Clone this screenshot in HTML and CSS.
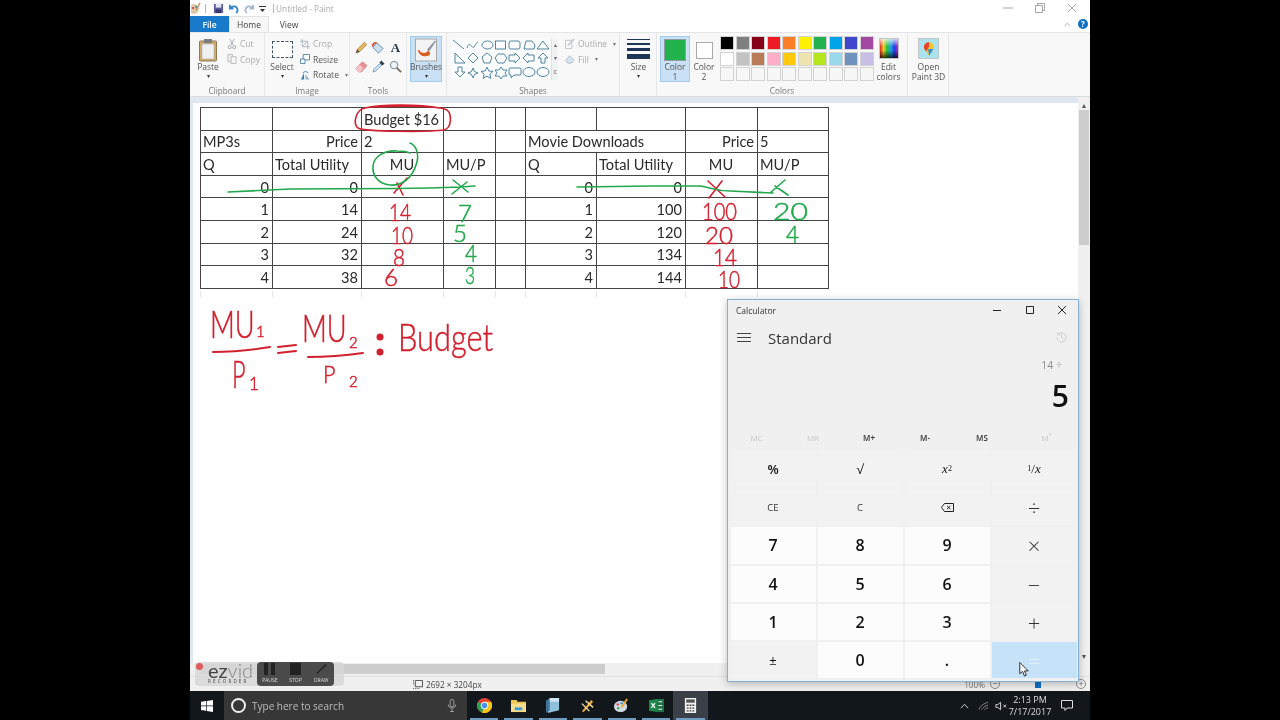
FILE: index.html
```html
<!DOCTYPE html>
<html lang="en">
<head>
<meta charset="utf-8">
<title>Untitled - Paint</title>
<link rel="stylesheet" href="styles.css">
</head>
<body>
<div class="stage">
  <header class="titlebar">
    <svg class="qa-app" viewBox="0 0 10 12"><circle cx="3" cy="7" r="5" fill="#d9c9a8"/><circle cx="2" cy="6" r="1" fill="#d33"/><circle cx="5" cy="5" r="1" fill="#38b"/><path d="M5 8 9 1" stroke="#b86" stroke-width="1.4"/></svg>
    <span class="qa-sep"></span>
    <svg class="qa" viewBox="0 0 12 12"><path d="M1 1h10v10H1z" fill="#5c5f9e"/><path d="M3 1h6v4H3z" fill="#e8e8f2"/><path d="M3 7h6v4H3z" fill="#33366e"/></svg>
    <svg class="qa" viewBox="0 0 12 12"><path d="M2 2v4h4M2.500 5.500C5 2.500 10 3 10.500 8c0 1-.5 2-1.500 3" fill="none" stroke="#3a86c8" stroke-width="2"/></svg>
    <svg class="qa qa-off" viewBox="0 0 12 12"><path d="M10 2v4H6M9.500 5.500C7 2.500 2 3 1.500 8c0 1 .5 2 1.500 3" fill="none" stroke="#a8bccb" stroke-width="2"/></svg>
    <svg class="qa-drop" viewBox="0 0 7 7"><path d="M0 1h7v1H0zM1 4h5L3.500 7z" fill="#333"/></svg>
    <span class="qa-sep"></span>
    <span class="title-text">Untitled - Paint</span>
    <div class="window-btns">
      <svg viewBox="0 0 10 10"><path d="M0 5h10" stroke="#a5a5a5"/></svg>
      <svg viewBox="0 0 10 10"><path d="M.5 2.500h7v7h-7zM2.500 2.500v-2h7v7h-2" fill="none" stroke="#a5a5a5"/></svg>
      <svg viewBox="0 0 10 10"><path d="M1 1l8 8M9 1l-8 8" stroke="#a5a5a5"/></svg>
    </div>
  </header>

  <nav class="tabs">
    <span class="tab tab-file">File</span>
    <span class="tab tab-active">Home</span>
    <span class="tab">View</span>
    <span class="tabs-right">
      <svg class="collapse" viewBox="0 0 8 5"><path d="M.5 4.500 4 1l3.500 3.500" fill="none" stroke="#a5a5a5"/></svg>
      <span class="help">?</span>
    </span>
  </nav>

  <section class="ribbon">
    <div class="group g-clipboard">
      <div class="group-body">
        <div class="big w36">
          <svg class="big-icon" viewBox="0 0 20 24"><rect x="1.500" y="3" width="17" height="20" rx="1" fill="#d0ab6c" stroke="#8d7a55"/><rect x="4" y="6" width="12" height="15" fill="#eef0f2" stroke="#a9a9a9" stroke-width=".5"/><rect x="6" y="1" width="8" height="4" fill="#7d7d80"/></svg>
          <span class="big-label">Paste</span><span class="drop">▾</span>
        </div>
        <ul class="small-list">
          <li class="small off"><svg viewBox="0 0 11 11"><path d="M3 0l4 7M8 0 4 7" stroke="#9fa3a8" fill="none"/><circle cx="3" cy="9" r="1.700" fill="none" stroke="#9fa3a8"/><circle cx="8" cy="9" r="1.700" fill="none" stroke="#9fa3a8"/></svg>Cut</li>
          <li class="small off"><svg viewBox="0 0 11 11"><path d="M1 .5h5v8H1z" fill="#eee" stroke="#bbb"/><path d="M4.500 3h5.500v7.500H4.500z" fill="#f6f6f6" stroke="#bbb"/></svg>Copy</li>
        </ul>
      </div>
      <span class="group-label">Clipboard</span>
    </div>

    <div class="group g-image">
      <div class="group-body">
        <div class="big w34">
          <span class="big-icon select-icon"></span>
          <span class="big-label">Select</span><span class="drop">▾</span>
        </div>
        <ul class="small-list">
          <li class="small off"><svg viewBox="0 0 11 11"><path d="M2.500 0v8.500H11M0 2.500h8.500V11" fill="none" stroke="#a9b4bb"/><path d="M3 8 8 3" stroke="#a9b4bb"/></svg>Crop</li>
          <li class="small"><svg viewBox="0 0 11 11"><path d="M3.500.5h7v6h-7z" fill="#fff" stroke="#4a7fa8"/><path d="M.5 5.500h5v5h-5z" fill="#fff" stroke="#4a7fa8"/></svg>Resize</li>
          <li class="small"><svg viewBox="0 0 11 11"><path d="M1 10.500 4.500 3v7.500z" fill="#3f7fb0"/><path d="M6 10.500V5l4.500 5.500z" fill="#8fb6d3"/><path d="M3 3Q6 0 9 3" fill="none" stroke="#3f7fb0"/></svg>Rotate<span class="drop-inline">▾</span></li>
        </ul>
      </div>
      <span class="group-label">Image</span>
    </div>

    <div class="group g-tools">
      <div class="tool-grid">
        <svg viewBox="0 0 14 14"><path d="M1 13l1.500-4L10 1.500 12.500 4 5 11.500z" fill="#e6b85c" stroke="#8a6a30" stroke-width=".7"/><path d="M1 13l1.500-4 2.500 2.500z" fill="#555"/></svg>
        <svg viewBox="0 0 14 14"><path d="M5 2l7 6-5 5-6-6z" fill="#cfe0ee" stroke="#5d8fb6"/><path d="M1 6Q0 2 5 2" fill="none" stroke="#d8533d" stroke-width="2"/></svg>
        <span class="tool-a">A</span>
        <svg viewBox="0 0 14 14"><path d="M1 9l7-7 5 4-6 7H4z" fill="#ee8f96" stroke="#bf6d73" stroke-width=".6"/><path d="M1 9l4-4 4 4-3 4H4z" fill="#f2c4c6"/></svg>
        <svg viewBox="0 0 14 14"><path d="M1 13l1-3 6-6 2 2-6 6z" fill="#cfe4f3" stroke="#4d7ea6" stroke-width=".7"/><path d="M8 3l2-2.500 3.500 3.500L11 6z" fill="#33424f"/></svg>
        <svg viewBox="0 0 14 14"><circle cx="5.500" cy="5.500" r="4" fill="#eef5fa" stroke="#6d7d88"/><path d="M8.500 8.500 13 13" stroke="#7b6f5f" stroke-width="2"/></svg>
      </div>
      <span class="group-label">Tools</span>
    </div>

    <div class="group g-brushes">
      <div class="big big-active w32">
        <svg class="big-icon brush-icon" viewBox="0 0 22 23"><rect x=".5" y=".5" width="21" height="22" fill="#f3f3f3" stroke="#a8a8a8"/><path d="M12 11 20 2l1 1-7 10z" fill="#8f9aa6"/><path d="M3 12c1 5 6 7 11 5 2-1 1-4-1-5-1 3-6 3-8 1 0-1-1-2-2-1z" fill="#d9601f"/></svg>
        <span class="big-label">Brushes</span><span class="drop">▾</span>
      </div>
      <span class="group-label">&nbsp;</span>
    </div>

    <div class="group g-shapes">
      <div class="group-body">
        <div class="shape-panel">
          <svg class="shape-art" viewBox="0 0 100 40">
            <path d="M2 1l11 9M16 9c3-9 5 2 7-1s3-5 4-5"/>
            <ellipse cx="36.500" cy="6" rx="5.500" ry="4"/><rect x="44.500" y="2" width="10" height="8"/><rect x="58" y="2" width="11" height="8" rx="2"/><path d="M73 10l2-8h6l3 4-1 4zM92 2l6 8H86z"/>
            <path d="M4 14v10h10zM22 14l5 5-5 5-5-5zM36 14l5 4-2 6h-6l-2-6zM47 15h6l3 4-3 5h-6l-3-5zM58 16h6v-2l5 5-5 5v-2h-6zM83 16h-6v-2l-5 5 5 5v-2h6zM92 14l5 5h-3v5h-4v-5h-3z"/>
            <path d="M7 28v5H4l5 5 5-5h-3v-5zM22 29l1.500 3.500L27 34l-3.500 1.500L22 39l-1.500-3.500L17 34l3.500-1.500zM36 28l1.800 4 4.200.4-3.200 2.800 1 4.200-3.800-2.200-3.800 2.200 1-4.200-3.200-2.800 4.200-.4zM50 28l2 3h4l-2 3 2 3h-4l-2 3-2-3h-4l2-3-2-3h4z"/>
            <path d="M59 29h10a1 1 0 0 1 1 1v5a1 1 0 0 1-1 1h-6l-3 3v-3h-1a1 1 0 0 1-1-1v-5a1 1 0 0 1 1-1z"/>
            <ellipse cx="78" cy="33" rx="6" ry="4.500"/><ellipse cx="92" cy="33" rx="6" ry="4.500"/>
          </svg>
          <div class="shape-scroll"><span>▴</span><span>▾</span><span>≡</span></div>
        </div>
        <ul class="small-list outline-list">
          <li class="small off"><svg viewBox="0 0 11 11"><path d="M.5 1.500h7v9h-7z" fill="none" stroke="#bcc3c9"/><path d="M3 7l7-7" stroke="#bcc3c9" stroke-width="1.500"/></svg>Outline<span class="drop-inline">▾</span></li>
          <li class="small off"><svg viewBox="0 0 11 11"><path d="M1 7l4-5 5 5-3 3H3z" fill="#d9e6ef" stroke="#a9bac6"/></svg>Fill<span class="drop-inline">▾</span></li>
        </ul>
      </div>
      <span class="group-label">Shapes</span>
    </div>

    <div class="group g-size">
      <div class="big w37">
        <span class="big-icon size-icon"><i class="l1"></i><i class="l2"></i><i class="l3"></i><i class="l4"></i></span>
        <span class="big-label">Size</span><span class="drop">▾</span>
      </div>
      <span class="group-label">&nbsp;</span>
    </div>

    <div class="group g-colors">
      <div class="group-body">
        <div class="big big-active w30 color-btn">
          <span class="big-icon"><span class="swatch-big green"></span></span>
          <span class="big-label">Color<br>1</span>
        </div>
        <div class="big w28 color-btn">
          <span class="big-icon"><span class="swatch-mid"></span></span>
          <span class="big-label">Color<br>2</span>
        </div>
        <div class="palette">
          <i class="c-black"></i><i class="c-gray"></i><i class="c-maroon"></i><i class="c-red"></i><i class="c-orange"></i><i class="c-yellow"></i><i class="c-green"></i><i class="c-blue"></i><i class="c-indigo"></i><i class="c-purple"></i>
          <i class="c-white"></i><i class="c-silver"></i><i class="c-brown"></i><i class="c-pink"></i><i class="c-gold"></i><i class="c-cream"></i><i class="c-lime"></i><i class="c-sky"></i><i class="c-slate"></i><i class="c-lav"></i>
          <i></i><i></i><i></i><i></i><i></i><i></i><i></i><i></i><i></i><i></i>
        </div>
        <div class="big w30">
          <span class="big-icon edit-icon"></span>
          <span class="big-label">Edit<br>colors</span>
        </div>
      </div>
      <span class="group-label">Colors</span>
    </div>

    <div class="group g-3d">
      <div class="big w41">
        <span class="big-icon p3d-icon">
          <svg viewBox="0 0 14 18"><path d="M7 1C3 1 1 4 1 7c0 3 3 5 4 7l2 3 2-3c1-2 4-4 4-7 0-3-2-6-6-6z" fill="#f7c52d"/><path d="M7 1C3 1 1 4 1 7c0 2 2 3 3 5l3-6z" fill="#e8412f"/><path d="M7 17l2-3c1-2 2-3 3-5L6 9z" fill="#2f8de0"/></svg>
        </span>
        <span class="big-label">Open<br>Paint 3D</span>
      </div>
      <span class="group-label">&nbsp;</span>
    </div>
  </section>

  <main class="workspace">
    <div class="canvas-col">
      <div class="sheet">
        <div class="page">
          <table class="grid">
            <colgroup><col class="c72"><col class="c89"><col class="c82"><col class="c52"><col class="c30"><col class="c71"><col class="c89"><col class="c72"><col class="c72b"></colgroup>
            <tr><td></td><td></td><td>Budget $16</td><td></td><td></td><td></td><td></td><td></td><td></td></tr>
            <tr><td>MP3s</td><td class="r">Price</td><td>2</td><td></td><td></td><td colspan="2">Movie Downloads</td><td class="r">Price</td><td>5</td></tr>
            <tr><td>Q</td><td>Total Utility</td><td class="ctr">MU</td><td>MU/P</td><td></td><td>Q</td><td>Total Utility</td><td class="ctr">MU</td><td>MU/P</td></tr>
            <tr><td class="r">0</td><td class="r">0</td><td></td><td></td><td></td><td class="r">0</td><td class="r">0</td><td></td><td></td></tr>
            <tr><td class="r">1</td><td class="r">14</td><td></td><td></td><td></td><td class="r">1</td><td class="r">100</td><td></td><td></td></tr>
            <tr><td class="r">2</td><td class="r">24</td><td></td><td></td><td></td><td class="r">2</td><td class="r">120</td><td></td><td></td></tr>
            <tr><td class="r">3</td><td class="r">32</td><td></td><td></td><td></td><td class="r">3</td><td class="r">134</td><td></td><td></td></tr>
            <tr><td class="r">4</td><td class="r">38</td><td></td><td></td><td></td><td class="r">4</td><td class="r">144</td><td></td><td></td></tr>
          </table>
          <div class="ticks"><i class="c72"></i><i class="c89"></i><i class="c82"></i><i class="c52"></i><i class="c30"></i><i class="c71"></i><i class="c89"></i><i class="c72"></i><i class="c72b"></i></div>

          <svg class="ink" viewBox="193 103 885 560">
            <g class="stroke-red">
              <path d="M440 108C420 104 380 104 365 108 355 110 353 124 358 128 365 132 430 132 444 130 452 128 452 114 447 110 440 106 400 106 370 107"/>
              <path d="M397 183 403 195M407 178 394 193M708 181 725 197M722 181 709 198"/>
              <path class="thick" d="M213 352Q240 352 270 347M308 357Q335 357 363 353M278 347 296 345M278 353 296 351"/>
            </g>
            <g class="stroke-green">
              <path d="M410 143C416 145 420 155 416 165 412 178 402 186 390 185 378 184 372 175 373 166 374 156 385 150 397 151 403 151 408 152 410 153"/>
              <path d="M228 192 290 189 397 188.500 430 188 460 187 475 186M453 180 468 192M452 194 467 182"/>
              <path d="M577 187 653 186 700 186C710 187 715 191 730 191L773 193M770 193 785 180M775 186 788 195"/>
            </g>
            <circle class="dot" cx="380" cy="337" r="3.500"/>
            <circle class="dot" cx="380" cy="352" r="3.500"/>
            <g class="hand-red">
              <text x="389" y="221" textLength="22" lengthAdjust="spacingAndGlyphs">14</text>
              <text x="391" y="244" textLength="22" lengthAdjust="spacingAndGlyphs">10</text>
              <text x="393" y="266" textLength="12" lengthAdjust="spacingAndGlyphs">8</text>
              <text x="384" y="286" textLength="14" lengthAdjust="spacingAndGlyphs">6</text>
              <text x="702" y="220" textLength="35" lengthAdjust="spacingAndGlyphs">100</text>
              <text x="705" y="244" textLength="28" lengthAdjust="spacingAndGlyphs">20</text>
              <text x="713" y="266" textLength="24" lengthAdjust="spacingAndGlyphs">14</text>
              <text x="718" y="288" textLength="22" lengthAdjust="spacingAndGlyphs">10</text>
              <text class="big-hand" transform="translate(210 338) scale(.72 1)">MU</text>
              <text class="sub-hand" x="256" y="337">1</text>
              <text class="big-hand" transform="translate(232 388) scale(.62 1)">P</text>
              <text class="sub-tall" x="249" y="390">1</text>
              <text class="big-hand" transform="translate(302 342) scale(.72 1)">MU</text>
              <text class="sub-hand" x="349" y="348">2</text>
              <text class="big-hand p2" transform="translate(323 383) scale(.9 1)">P</text>
              <text class="sub-hand" x="349" y="387">2</text>
              <text class="big-hand" x="398" y="351" textLength="95" lengthAdjust="spacingAndGlyphs">Budget</text>
            </g>
            <g class="hand-green">
              <text x="458" y="222" textLength="14" lengthAdjust="spacingAndGlyphs">7</text>
              <text x="453" y="242" textLength="14" lengthAdjust="spacingAndGlyphs">5</text>
              <text x="465" y="262" textLength="12" lengthAdjust="spacingAndGlyphs">4</text>
              <text x="465" y="284" textLength="10" lengthAdjust="spacingAndGlyphs">3</text>
              <text x="773" y="220" textLength="35" lengthAdjust="spacingAndGlyphs">20</text>
              <text x="786" y="243" textLength="13" lengthAdjust="spacingAndGlyphs">4</text>
            </g>
          </svg>
        </div>
      </div>
      <div class="hscroll"><span class="hthumb"></span></div>
    </div>
    <aside class="vscroll">
      <span class="varrow">▴</span>
      <span class="vthumb"></span>
      <span class="varrow varrow-down">▾</span>
    </aside>
  </main>

  <footer class="statusbar">
    <svg class="dim-icon" viewBox="0 0 11 10"><path d="M2.500.5h8v7h-8z" fill="none" stroke="#444"/><path d="M0 9.500h8M.5 0v6" stroke="#444" stroke-dasharray="1 1"/></svg>
    <span class="dim-text">2692 × 3204px</span>
    <span class="zoom-tools">
      <span class="zoom-pct">100%</span>
      <span class="zoom-btn">−</span>
      <span class="zoom-track"><i></i></span>
      <span class="zoom-btn">+</span>
    </span>
  </footer>

  <div class="taskbar">
    <span class="start"><svg viewBox="0 0 12 12"><path d="M0 1.700 5 1v4.500H0zM5.700.9 12 0v5.500H5.700zM0 6.300h5v4.500l-5-.7zM5.700 6.300H12V12l-6.300-.9z" fill="#fff"/></svg></span>
    <span class="search">
      <span class="cortana"></span>
      <span class="search-text">Type here to search</span>
      <svg class="mic" viewBox="0 0 10 14"><rect x="3" y="0.500" width="4" height="8" rx="2" fill="none" stroke="#a9a9a9"/><path d="M1 6c0 5 8 5 8 0M5 10.500V13.500M3 13.500h4" fill="none" stroke="#a9a9a9"/></svg>
    </span>
    <span class="task">
      <svg viewBox="0 0 16 16"><circle cx="8" cy="8" r="8" fill="#e34133"/><path d="M8 8 1 4a8 8 0 0 0 4.500 11.600z" fill="#2fa04f"/><path d="M8 8l-2.500 7.600A8 8 0 0 0 15 4H8z" fill="#f5c518"/><circle cx="8" cy="8" r="3.600" fill="#4b8fe8" stroke="#fff"/></svg>
    </span>
    <span class="task">
      <svg viewBox="0 0 16 14"><path d="M0 1h6l1 2h9v11H0z" fill="#f0c65a"/><path d="M0 5h16v9H0z" fill="#f7dd8c"/><path d="M4 9h8v3H4z" fill="#3d9bd6"/></svg>
    </span>
    <span class="task">
      <svg viewBox="0 0 14 16"><path d="M4 0h10v13L2 16z" fill="#8fc1dd"/><path d="M4 0 0 3v13l4-3z" fill="#3d7497"/><path d="M4 0h10v4H4z" fill="#cfe4f0"/></svg>
    </span>
    <span class="task">
      <svg viewBox="0 0 16 16"><path d="M2 14 12 2l2 2L4 15z" fill="#f0a93b"/><path d="M2 6l8 8M6 3l8 7" stroke="#f3dfae" stroke-width="1.500"/></svg>
    </span>
    <span class="task">
      <svg viewBox="0 0 16 16"><ellipse cx="7" cy="9" rx="7" ry="6" fill="#cfdce6"/><circle cx="4" cy="7" r="1.300" fill="#e34b3c"/><circle cx="8" cy="5.500" r="1.300" fill="#3d9bd6"/><circle cx="4.500" cy="11" r="1.300" fill="#4ca34f"/><path d="M8 10 14 1" stroke="#f0a93b" stroke-width="2"/></svg>
    </span>
    <span class="task">
      <svg viewBox="0 0 16 16"><path d="M8 1h8v14H8z" fill="#1e7145"/><path d="M10 4h4M10 8h4M10 12h4" stroke="#fff"/><path d="M0 2.500 9 1v14l-9-1.500z" fill="#1c8a4c"/><path d="M2.500 5.500l4 5M6.500 5.500l-4 5" stroke="#fff" stroke-width="1.300"/></svg>
    </span>
    <span class="task task-active">
      <svg viewBox="0 0 12 16"><rect width="12" height="16" fill="#f1f1f1"/><rect x="1.500" y="1.500" width="9" height="3.500" fill="#555"/><path d="M2 7h2v1.500H2zM5 7h2v1.500H5zM8 7h2v1.500H8zM2 10h2v1.500H2zM5 10h2v1.500H5zM8 10h2v1.500H8zM2 13h2v1.500H2zM5 13h2v1.500H5zM8 13h2v1.500H8z" fill="#444"/></svg>
    </span>
    <span class="tray">
      <svg class="tray-caret" viewBox="0 0 10 6"><path d="M1 5.500 5 1l4 4.500" fill="none" stroke="#ddd"/></svg>
      <svg class="tray-wifi" viewBox="0 0 12 10"><path d="M1 9C3 4 7 2 11 1M4 9c1-2 3-4 7-5M7 9c1-1 2-2 4-2" fill="none" stroke="#8e8e8e"/></svg>
      <svg class="tray-vol" viewBox="0 0 14 10"><path d="M1 3.500h2L6 1v8L3 6.500H1z" fill="none" stroke="#ddd"/><path d="M9 3.500l3 3M12 3.500l-3 3" stroke="#ddd"/></svg>
      <span class="clock">2:13 PM<br>7/17/2017</span>
      <svg class="tray-note" viewBox="0 0 12 11"><path d="M.5.500h11v7.500H6L4 10.500V8H.5z" fill="none" stroke="#ddd"/></svg>
    </span>
  </div>

  <aside class="calc">
    <div class="calc-title">
      <span class="calc-name">Calculator</span>
      <span class="calc-controls">
        <svg viewBox="0 0 10 10"><path d="M1 5.500h8" stroke="#222"/></svg>
        <svg viewBox="0 0 10 10"><path d="M1.500 1.500h7v7h-7z" fill="none" stroke="#222"/></svg>
        <svg viewBox="0 0 10 10"><path d="M1 1l8 8M9 1 1 9" stroke="#222"/></svg>
      </span>
    </div>
    <div class="calc-head">
      <svg class="hamburger" viewBox="0 0 14 9"><path d="M0 .5h14M0 4.500h14M0 8.500h14" stroke="#444"/></svg>
      <span class="calc-mode">Standard</span>
      <svg class="history" viewBox="0 0 12 12"><path d="M2 3A5 5 0 1 1 1 6M2 .5V3h2.500M6 3v3l2 1.500" fill="none" stroke="#c9c9c9"/></svg>
    </div>
    <div class="calc-expr">14 ÷</div>
    <div class="calc-value">5</div>
    <div class="calc-mem">
      <span class="m-off">MC</span><span class="m-off">MR</span><span>M+</span><span>M-</span><span>MS</span><span class="m-off m-last">M<sup>*</sup></span>
    </div>
    <div class="keys">
      <button class="key op">%</button>
      <button class="key op thin">√</button>
      <button class="key op math"><em>x</em><sup>2</sup></button>
      <button class="key op math"><sup>1</sup>/<em>x</em></button>
      <button class="key op sm">CE</button>
      <button class="key op sm">C</button>
      <button class="key op"><svg class="bksp" viewBox="0 0 13 9"><path d="M3.500.5h9v8h-9L.5 4.500z" fill="none" stroke="#222"/><path d="M6 2.800l3.500 3.400M9.500 2.800 6 6.200" stroke="#222"/></svg></button>
      <button class="key op sym">÷</button>
      <button class="key num">7</button>
      <button class="key num">8</button>
      <button class="key num">9</button>
      <button class="key op sym">×</button>
      <button class="key num">4</button>
      <button class="key num">5</button>
      <button class="key num">6</button>
      <button class="key op sym">−</button>
      <button class="key num">1</button>
      <button class="key num">2</button>
      <button class="key num">3</button>
      <button class="key op sym">+</button>
      <button class="key op plusminus">±</button>
      <button class="key num">0</button>
      <button class="key num">.</button>
      <button class="key eq sym">=</button>
    </div>
    <svg class="cursor" viewBox="0 0 10 16"><path d="M.5.500v12l3-2.500 2 5 2-1-2-4.500h4z" fill="#fff" stroke="#222"/></svg>
  </aside>

  <div class="ezvid">
    <span class="rec-dot"></span>
    <span class="ez-logo"><span class="ez-word">ez<span class="ez-thin">vid</span></span><span class="ez-sub">RECORDER</span></span>
    <div class="ez-panel">
      <span class="ez-btn"><span class="ez-pause"><i></i><i></i></span>PAUSE</span>
      <span class="ez-btn"><span class="ez-stop"></span>STOP</span>
      <span class="ez-btn"><svg viewBox="0 0 12 12"><path d="M1 11 11 1" stroke="#222" stroke-width="1.500"/></svg>DRAW</span>
    </div>
  </div>
</div>
</body>
</html>
```

FILE: styles.css
```css
* { box-sizing: border-box; }
html, body { margin: 0; height: 100%; background: #000; overflow: hidden; }
body { display: flex; justify-content: center; font-family: "Open Sans", "Liberation Sans", sans-serif; }
ul { list-style: none; margin: 0; padding: 0; }

.stage { position: relative; width: 900px; height: 720px; display: flex; flex-direction: column; background: #fff; overflow: hidden; filter: blur(.3px); }

/* title bar */
.titlebar { height: 16px; display: flex; align-items: center; background: #fff; }
.qa-app { width: 10px; height: 12px; margin-left: 1px; }
.qa-sep { width: 1px; height: 9px; background: #b5b5b5; margin: 0 4px; }
.qa { width: 11px; height: 11px; margin: 0 2.500px 0 2.500px; }
.qa + .qa { margin-left: 2px; }
.qa-off { margin-left: 4px; }
.qa-drop { width: 7px; height: 7px; margin: 0 3px 0 2px; }
.title-text { font-size: 8.300px; color: #aaa; margin-left: -2px; }
.window-btns { margin-left: auto; display: flex; gap: 22px; padding-right: 13px; }
.window-btns svg { width: 10px; height: 10px; }

/* tabs */
.tabs { height: 16px; display: flex; align-items: stretch; background: #fff; font-size: 8.500px; color: #444; }
.tab { display: flex; align-items: center; justify-content: center; width: 40px; }
.tab-file { width: 39px; background: #1979ca; color: #fff; font-weight: 600; }
.tab-active { background: #f7f7f8; border: 1px solid #e2e3e4; border-bottom: 0; }
.tabs-right { margin-left: auto; display: flex; align-items: center; gap: 7px; padding-right: 2px; }
.collapse { width: 7px; height: 5px; }
.help { width: 10px; height: 10px; border-radius: 50%; background: #0f6fc6; color: #fff; font-size: 8px; font-weight: 700; line-height: 10px; text-align: center; }

/* ribbon */
.ribbon { height: 65px; display: flex; background: #f8f8f9; border-top: 1px solid #e4e5e7; border-bottom: 1px solid #dadbdd; font-size: 8.500px; color: #555; }
.group { display: flex; flex-direction: column; justify-content: space-between; padding-top: 3px; border-right: 1px solid #e6e7e9; flex: none; }
.group-body { display: flex; }
.group-label { line-height: 10px; text-align: center; color: #777; font-size: 8.200px; }
.g-clipboard { width: 75px; }
.g-image { width: 85px; }
.g-tools { width: 57px; }
.g-brushes { width: 40px; padding-left: 3px; }
.g-shapes { width: 173px; padding-left: 4px; }
.g-shapes .group-label { margin-left: -4px; }
.g-size { width: 37px; }
.g-colors { width: 251px; padding-left: 3px; }
.g-colors .group-label { margin-left: -3px; }
.g-3d { width: 41px; }

.big { height: 46px; display: flex; flex-direction: column; align-items: center; padding-top: 2px; line-height: 9.500px; text-align: center; flex: none; }
.big-icon { width: 22px; height: 24px; display: flex; align-items: center; justify-content: center; }
.big-label { display: block; white-space: nowrap; }
.drop { font-size: 6px; line-height: 9.500px; color: #333; }
.drop-inline { font-size: 6px; color: #777; margin-left: 3px; }
.w28 { width: 28px; } .w30 { width: 30px; } .w32 { width: 32px; } .w34 { width: 34px; } .w36 { width: 36px; } .w37 { width: 37px; } .w41 { width: 41px; }
.big-active { background: #c9e0f5; border: 1px solid #a4cbea; padding-top: 1px; }

.small-list { display: flex; flex-direction: column; }
.small { height: 15.500px; display: flex; align-items: center; gap: 3px; white-space: nowrap; }
.small svg { width: 10px; height: 10px; flex: none; margin-left: 1px; }
.off { color: #aaa; }

.select-icon { border: 1px dashed #3f5565; width: 21px; height: 17px; margin: 3px 0 4px; background: #fff; }

.tool-grid { display: grid; grid-template-columns: repeat(3, 17px); grid-auto-rows: 19px; margin: 2px 0 0 3px; align-items: center; justify-items: center; }
.tool-grid svg { width: 13px; height: 13px; }
.tool-a { font-family: "Liberation Serif", serif; font-weight: 700; font-size: 13px; color: #26384a; }

.shape-panel { display: flex; margin-top: 3px; height: 41px; }
.shape-art { width: 100px; height: 40px; background: #fbfcfd; border: 0; fill: none; stroke: #3f7896; stroke-width: .9; }
.shape-scroll { width: 7px; display: flex; flex-direction: column; background: #f0f1f2; border-left: 1px solid #dfe0e2; font-size: 6px; text-align: center; line-height: 13.300px; color: #666; }
.outline-list { margin-left: 6px; }

.size-icon { flex-direction: column; width: 23px; justify-content: flex-start; gap: 3px; padding-top: 1px; }
.size-icon i { display: block; width: 100%; background: #1d3557; }
.l1 { height: 1px; } .l2 { height: 2px; } .l3 { height: 3px; } .l4 { height: 5px; }

.color-btn { flex: none; }
.swatch-big { width: 22px; height: 22px; border: 1px solid #8e9aa5; display: block; }
.green { background: #22b14c; }
.swatch-mid { width: 17px; height: 17px; background: #fff; border: 1px solid #a9a9a9; display: block; }
.palette { display: grid; grid-template-columns: repeat(10, 14px); grid-auto-rows: 14px; gap: 1.500px; margin: 0 0 0 2px; }
.palette i { display: block; background: #f7f7f7; border: 1px solid #d2d2d2; }
.palette .c-black { background: #000; } .palette .c-gray { background: #7f7f7f; } .palette .c-maroon { background: #880015; } .palette .c-red { background: #ed1c24; } .palette .c-orange { background: #ff7f27; } .palette .c-yellow { background: #fff200; } .palette .c-green { background: #22b14c; } .palette .c-blue { background: #00a2e8; } .palette .c-indigo { background: #3f48cc; } .palette .c-purple { background: #a349a4; }
.palette .c-white { background: #fff; } .palette .c-silver { background: #c3c3c3; } .palette .c-brown { background: #b97a57; } .palette .c-pink { background: #ffaec9; } .palette .c-gold { background: #ffc90e; } .palette .c-cream { background: #efe4b0; } .palette .c-lime { background: #b5e61d; } .palette .c-sky { background: #99d9ea; } .palette .c-slate { background: #7092be; } .palette .c-lav { background: #c8bfe7; }
.edit-icon { width: 20px; height: 21px; margin-bottom: 3px; border: 1px solid #c4c4c4; background: linear-gradient(to bottom, rgba(255,255,255,.75), transparent 40%, transparent 60%, rgba(0,0,0,.75)), linear-gradient(to right, #e02020, #e8d020, #20c040, #20a0e0, #2040e0, #c020c0); }
.p3d-icon { width: 21px; height: 21px; margin-bottom: 3px; background: #a8e3ef; border: 1px solid #c5c5c5; }
.p3d-icon svg { width: 12px; height: 16px; }

/* workspace */
.workspace { flex: 1; min-height: 0; display: flex; background: #dfe7f1; }
.canvas-col { flex: 1; min-width: 0; display: flex; flex-direction: column; }
.sheet { flex: 1; min-height: 0; padding: 6px 0 0 3px; display: flex; }
.page { flex: 1; position: relative; background: #fff; padding: 4px 0 0 7px; overflow: hidden; }

.grid { border-collapse: collapse; table-layout: fixed; width: 628px; font-family: Lato, "Liberation Sans", sans-serif; font-size: 14.600px; color: #2a2a2a; }
.grid tr { height: 22.600px; }
.grid td { border: 1px solid #444; padding: 1px 3px 0 2px; white-space: nowrap; overflow: visible; }
.c72 { width: 72px; } .c89 { width: 89px; } .c82 { width: 82px; } .c52 { width: 52px; } .c30 { width: 30px; } .c71 { width: 71px; } .c72b { width: 71px; }
.r { text-align: right; }
.ctr { text-align: center; }
.ticks { display: flex; height: 6px; margin-top: 2px; }
.ticks i { display: block; border-left: 1px solid #e3e3e3; flex: none; }

.ink { position: absolute; left: 0; top: 0; width: 885px; height: 560px; overflow: visible; }
.stroke-red path, .stroke-green path { fill: none; stroke-width: 1.600; stroke-linecap: round; stroke-linejoin: round; }
.stroke-red path { stroke: #d3202e; }
.stroke-red .thick { stroke-width: 2; }
.stroke-green path { stroke: #22a84c; }
.dot { fill: #d3202e; }
.hand-red text, .hand-green text { font-family: Lato, "Open Sans", sans-serif; font-weight: 300; font-size: 24px; stroke-width: .5px; }
.hand-red text { fill: #d3202e; stroke: #d3202e; }
.hand-green text { fill: #22a84c; stroke: #22a84c; }
.hand-red .big-hand { font-size: 38px; }
.hand-red .p2 { font-size: 24px; }
.hand-red .sub-hand { font-size: 15px; }
.hand-red .sub-tall { font-size: 17px; }

.hscroll { height: 13px; background: #f0f0f0; padding: 1px 0 2px 10px; display: flex; }
.hthumb { width: 405px; background: #cdcdcd; }
.vscroll { width: 12px; background: #f0f0f0; display: flex; flex-direction: column; align-items: center; padding-top: 3px; }
.varrow { font-size: 8px; line-height: 10px; color: #555; }
.vthumb { width: 10px; height: 135px; background: #cdcdcd; }
.varrow-down { margin-top: auto; margin-bottom: 15px; }

/* status bar */
.statusbar { height: 15px; display: flex; align-items: center; background: #f0f0f0; font-size: 8.200px; color: #444; border-top: 1px solid #e0e0e0; }
.dim-icon { width: 10px; height: 9px; margin-left: 223px; }
.dim-text { margin-left: 3px; }
.zoom-tools { margin-left: auto; display: flex; align-items: center; padding-right: 4px; }
.zoom-pct { margin-right: 5px; color: #777; }
.zoom-btn { width: 10px; height: 10px; border: 1px solid #888; border-radius: 50%; font-size: 9px; line-height: 8px; text-align: center; color: #666; }
.zoom-track { width: 72px; height: 10px; position: relative; margin: 0 2px; }
.zoom-track i { position: absolute; left: 33px; top: 1px; width: 6px; height: 8px; background: #0f6fc6; }

/* taskbar */
.taskbar { height: 29px; display: flex; align-items: stretch; background: #12171c; color: #ddd; }
.start { width: 34px; display: flex; align-items: center; justify-content: center; }
.start svg { width: 12px; height: 12px; }
.search { width: 243px; background: #373737; display: flex; align-items: center; padding-left: 7px; }
.cortana { width: 15px; height: 15px; border: 2px solid #eee; border-radius: 50%; }
.search-text { margin-left: 6px; font-size: 10px; color: #bdbdbd; }
.mic { width: 10px; height: 13px; margin-left: auto; margin-right: 10px; }
.task { width: 34.400px; display: flex; align-items: center; justify-content: center; position: relative; }
.task svg { width: 15px; height: 15px; }
.task::after { content: ""; position: absolute; left: 3px; right: 3px; bottom: 0; height: 2px; background: #6f9dc2; }
.task-active { background: #3b4048; }
.tray { margin-left: auto; display: flex; align-items: center; padding-right: 17px; }
.tray-caret { width: 9px; height: 6px; margin-right: 9px; }
.tray-wifi { width: 11px; height: 10px; margin-right: 6px; }
.tray-vol { width: 13px; height: 10px; }
.clock { width: 44px; text-align: center; font-size: 9px; line-height: 12px; white-space: nowrap; }
.tray-note { width: 12px; height: 11px; margin-left: 9px; }

/* calculator */
.calc { position: absolute; left: 537px; top: 299px; width: 352px; height: 383px; background: #f0f0f0; border: 1px solid #86afd4; box-shadow: 0 2px 8px rgba(0,0,0,.25); display: flex; flex-direction: column; color: #222; }
.calc-title { height: 20px; display: flex; align-items: center; justify-content: space-between; padding-left: 8px; flex: none; }
.calc-name { font-size: 8.500px; color: #333; }
.calc-controls { display: flex; gap: 22.500px; padding-right: 11px; }
.calc-controls svg { width: 10px; height: 10px; }
.calc-head { height: 35px; display: flex; align-items: center; padding-left: 9px; flex: none; }
.hamburger { width: 14px; height: 9px; }
.calc-mode { margin-left: 17px; font-size: 15px; color: #333; }
.history { width: 11px; height: 11px; margin-left: auto; margin-right: 11px; }
.calc-expr { text-align: right; padding-right: 16px; font-size: 10.500px; line-height: 12px; color: #8f8f8f; margin-top: 4px; flex: none; }
.calc-value { text-align: right; padding-right: 9px; font-size: 30px; font-weight: 600; line-height: 40px; color: #111; margin-top: 5px; flex: none; }
.calc-mem { display: grid; grid-template-columns: 57px 56px 56px 56px 58px 67px; margin-top: 15px; height: 14px; font-size: 8px; font-weight: 600; line-height: 14px; color: #333; text-align: center; flex: none; }
.m-off { color: #c6c6c6; font-weight: 400; }
.m-last { padding-left: 4px; }
.calc-mem sup { font-size: 6px; line-height: 0; }
.keys { margin: 6px 3px 3px 2.500px; flex: 1; display: grid; grid-template-columns: repeat(4, 85px); grid-template-rows: repeat(6, 1fr); gap: 2px; }
.key { border: 0; padding: 0; margin: 0; font-family: inherit; color: #111; display: flex; align-items: center; justify-content: center; }
.op { background: #f2f2f2; font-size: 13px; font-weight: 600; }
.thin { font-weight: 400; }
.num { background: #fcfcfc; font-size: 16px; font-weight: 600; }
.sm { font-size: 9.500px; font-weight: 400; color: #333; }
.math { font-family: "Liberation Serif", serif; font-weight: 400; font-size: 13px; }
.math sup { font-size: 8px; line-height: 0; }
.sym { font-size: 22px; font-weight: 300; color: #333; line-height: 1; }
.plusminus { font-size: 13px; font-weight: 400; }
.eq { background: #c5e2f9; color: #e4f1fc; }
.bksp { width: 13px; height: 9px; }
.cursor { position: absolute; left: 291px; top: 362px; width: 10px; height: 15px; }

/* recorder */
.ezvid { position: absolute; left: 5px; top: 662px; width: 149px; height: 24px; background: rgba(215,215,215,.85); border-radius: 4px; display: flex; align-items: stretch; }
.rec-dot { position: absolute; left: 1px; top: 1px; width: 7px; height: 7px; border-radius: 50%; background: #e25b5b; }
.ez-logo { width: 49px; margin-left: 13px; display: flex; flex-direction: column; color: #444; line-height: 1; }
.ez-word { font-size: 20px; line-height: 17px; font-family: Lato, sans-serif; }
.ez-thin { font-weight: 300; color: #888; }
.ez-sub { font-size: 4.500px; letter-spacing: 2.200px; color: #444; white-space: nowrap; }
.ez-panel { width: 77px; height: 24px; display: flex; background: #4b4b4b; border-radius: 4px; }
.ez-btn { flex: 1; display: flex; flex-direction: column; align-items: center; font-size: 5px; line-height: 6px; color: #ddd; padding-top: 1px; }
.ez-btn svg, .ez-stop, .ez-pause { width: 11px; height: 12px; margin-bottom: 2px; flex: none; }
.ez-pause { display: flex; justify-content: space-between; }
.ez-pause i { width: 4px; background: #222; }
.ez-stop { background: #222; }
```
